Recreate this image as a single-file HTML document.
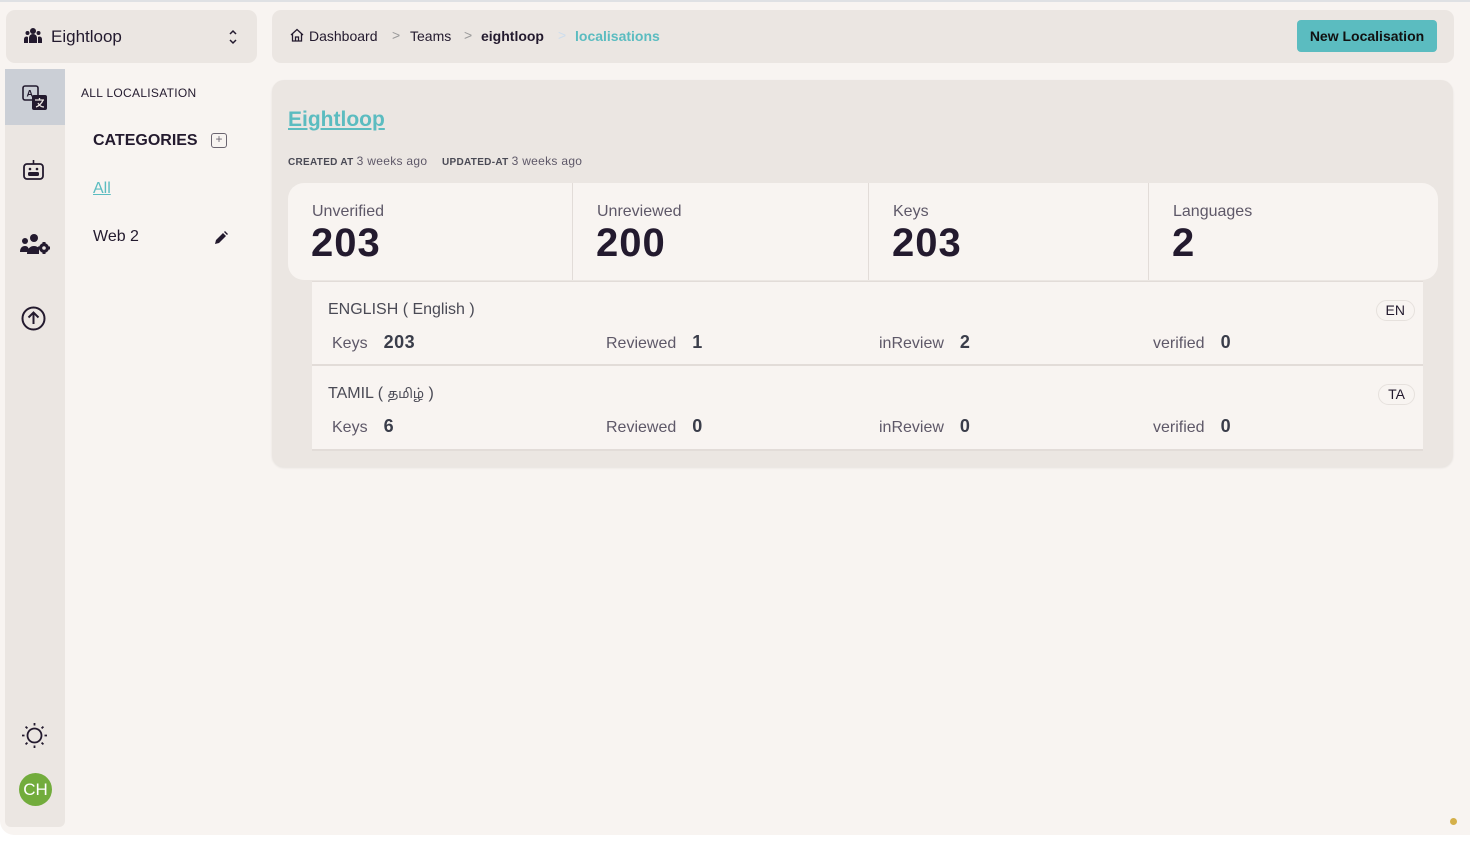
<!DOCTYPE html>
<html><head><style>
*{box-sizing:border-box;margin:0;padding:0}
body{width:1479px;height:841px;background:#fff;font-family:"Liberation Sans","Noto Sans Tamil",sans-serif;position:relative;overflow:hidden;color:#231a2e}
.app{position:absolute;left:0;top:0;width:1470px;height:835px;background:#f8f4f1;border-top:2px solid #dfe1e4;border-radius:0 0 0 14px}
.abs{position:absolute}
.team{left:6px;top:8px;width:251px;height:53px;background:#ebe6e2;border-radius:9px}
.rail{left:5px;top:67px;width:60px;height:758px;background:#ebe6e2;border-radius:0 0 6px 6px}
.bc{left:272px;top:8px;width:1182px;height:53px;background:#ebe6e2;border-radius:9px;font-size:14px}
.card{left:272px;top:78px;width:1181px;height:387px;background:#ebe6e2;border-radius:12px;box-shadow:0 1px 2px rgba(0,0,0,.08)}
.stats{left:16px;top:103px;width:1150px;height:97px;background:#f8f4f1;border-radius:16px}
.stat{position:absolute;top:0;height:97px;border-left:1px solid #e2dcd8}
.stat .l{position:absolute;left:24px;top:20px;font-size:16px;color:#5e5868}
.stat .n{position:absolute;left:23px;top:38px;font-size:40px;font-weight:bold;color:#231a2e;letter-spacing:1px}
.row{position:absolute;left:40px;width:1111px;height:85px;background:#f8f4f1;border-bottom:2px solid #e2dcd8}
.row .t{position:absolute;left:16px;top:19px;font-size:16px;color:#4a4a55}
.row .c{position:absolute;top:50px;font-size:16px;color:#5e5868}
.row .c b{color:#3a3d4a;margin-left:16px;font-size:18px;letter-spacing:.5px}
.pill{position:absolute;right:8px;top:18px;height:21px;padding:0 9px;border:1px solid #e6e1dd;border-radius:11px;font-size:14px;line-height:19px;color:#231a2e}
</style></head><body>
<div class="app">
 <div class="abs team">
  <svg class="abs" style="left:18px;top:17px" width="18" height="17" viewBox="0 0 18 17" fill="#231a2e"><circle cx="9" cy="4" r="3"/><circle cx="3.5" cy="6" r="2"/><circle cx="14.5" cy="6" r="2"/><path d="M5 16v-5a4 4 0 0 1 8 0v5z"/><path d="M0 16v-4a2.5 2.5 0 0 1 4-2v6zM18 16v-4a2.5 2.5 0 0 0-4-2v6z"/></svg>
  <span class="abs" style="left:45px;top:17px;font-size:17px">Eightloop</span>
  <svg class="abs" style="left:222px;top:19px" width="10" height="16" viewBox="0 0 10 16" fill="none" stroke="#231a2e" stroke-width="1.5"><path d="M2 5l3-3 3 3M2 11l3 3 3-3"/></svg>
 </div>
 <div class="abs rail">
  <div class="abs" style="left:0;top:0;width:60px;height:56px;background:#cbcfd6"></div>
  <svg class="abs" style="left:17px;top:16px" width="26" height="26" viewBox="0 0 26 26"><rect x="1" y="1" width="15" height="14" rx="2" fill="none" stroke="#231a2e" stroke-width="1.6"/><text x="4.5" y="11.5" font-size="9" font-weight="bold" fill="#231a2e" font-family="Liberation Sans">A</text><rect x="10" y="10" width="15" height="15" rx="2" fill="#231a2e"/><path d="M13 15h9M17.5 13v2M14 22c3-1 6-4 7-7M16 18c1 2 3 4 6 4" stroke="#ebe6e2" stroke-width="1.3" fill="none"/></svg>
  <svg class="abs" style="left:18px;top:90px" width="21" height="22" viewBox="0 0 21 22"><path d="M10.5 1v4" stroke="#231a2e" stroke-width="1.6"/><rect x="1" y="5" width="19" height="15" rx="3" fill="none" stroke="#231a2e" stroke-width="1.8"/><circle cx="7" cy="10" r="1.3" fill="#231a2e"/><circle cx="14" cy="10" r="1.3" fill="#231a2e"/><rect x="5" y="13" width="11" height="4" rx="1.5" fill="#231a2e"/></svg>
  <svg class="abs" style="left:15px;top:164px" width="30" height="22" viewBox="0 0 30 22" fill="#231a2e"><circle cx="14" cy="5" r="4"/><circle cx="5" cy="8" r="3"/><path d="M0 19c0-4 2-6 5-6s4 2 4 6zM7 21c0-5 3-8 7-8 2 0 4 1 5 2v6z"/><circle cx="24" cy="15" r="5"/><circle cx="24" cy="15" r="1.8" fill="#ebe6e2"/><path d="M22.5 9h3v2h-3zM22.5 19h3v2h-3zM18 13.5h2v3h-2zM28 13.5h2v3h-2z"/></svg>
  <svg class="abs" style="left:16px;top:237px" width="25" height="25" viewBox="0 0 25 25" fill="none" stroke="#231a2e" stroke-width="2"><circle cx="12.5" cy="12.5" r="11"/><path d="M12.5 18V7M7.5 11.5l5-5 5 5"/></svg>
  <svg class="abs" style="left:16px;top:653px" width="27" height="27" viewBox="0 0 27 27" stroke="#231a2e" fill="none"><circle cx="13.5" cy="13.5" r="7" stroke-width="1.8"/><g stroke-width="1.8"><path d="M13.5 1v2.5M13.5 23.5V26M1 13.5h2.5M23.5 13.5H26M4.6 4.6l1.8 1.8M20.6 20.6l1.8 1.8M4.6 22.4l1.8-1.8M20.6 6.4l1.8-1.8"/></g></svg>
  <div class="abs" style="left:14px;top:704px;width:33px;height:33px;border-radius:50%;background:#72ac3c;color:#fff;font-size:17px;line-height:33px;text-align:center">CH</div>
 </div>
 <span class="abs" style="left:81px;top:84px;font-size:12px;letter-spacing:.3px">ALL LOCALISATION</span>
 <span class="abs" style="left:93px;top:130px;font-size:16px;font-weight:bold">CATEGORIES</span>
 <div class="abs" style="left:211px;top:131px;width:16px;height:15px;border:1.5px solid #6b6570;border-radius:3px;font-size:12px;line-height:11px;text-align:center;color:#6b6570">+</div>
 <span class="abs" style="left:93px;top:178px;font-size:16px;color:#5bbcc0;text-decoration:underline">All</span>
 <span class="abs" style="left:93px;top:226px;font-size:16px">Web 2</span>
 <svg class="abs" style="left:214px;top:229px" width="14" height="14" viewBox="0 0 14 14" fill="#231a2e"><path d="M1 13l1-4 7-7 3 3-7 7zM10 1l1-1 3 3-1 1z"/></svg>
 <div class="abs bc">
  <svg class="abs" style="left:18px;top:18px" width="14" height="14" viewBox="0 0 14 14" fill="none" stroke="#231a2e" stroke-width="1.3"><path d="M1 7l6-5.5L13 7M2.5 5.5V13h9V5.5M5.5 13V9h3v4"/></svg>
  <span class="abs" style="left:37px;top:18px">Dashboard</span>
  <span class="abs" style="left:120px;top:17px;color:#999">&gt;</span>
  <span class="abs" style="left:138px;top:18px">Teams</span>
  <span class="abs" style="left:192px;top:17px;color:#999">&gt;</span>
  <span class="abs" style="left:209px;top:18px;font-weight:bold">eightloop</span>
  <span class="abs" style="left:286px;top:17px;color:#cde">&gt;</span>
  <span class="abs" style="left:303px;top:18px;color:#5bbcc0;font-weight:bold">localisations</span>
  <div class="abs" style="left:1025px;top:10px;width:140px;height:32px;background:#5bbcc0;border-radius:4px;font-weight:bold;line-height:32px;text-align:center;color:#111">New Localisation</div>
 </div>
 <div class="abs card">
  <span class="abs" style="left:16px;top:28px;font-size:21px;font-weight:bold;color:#5bbcc0;text-decoration:underline">Eightloop</span>
  <span class="abs" style="left:16px;top:74px;font-size:10px;font-weight:bold;color:#4a4a55;letter-spacing:.3px">CREATED AT <span style="font-weight:normal;font-size:12px;color:#5e5868">3 weeks ago</span></span>
  <span class="abs" style="left:170px;top:74px;font-size:10px;font-weight:bold;color:#4a4a55;letter-spacing:.3px">UPDATED-AT <span style="font-weight:normal;font-size:12px;color:#5e5868">3 weeks ago</span></span>
  <div class="abs stats">
   <div class="stat" style="left:0;width:284px;border:none"><span class="l">Unverified</span><span class="n">203</span></div>
   <div class="stat" style="left:284px;width:296px"><span class="l">Unreviewed</span><span class="n">200</span></div>
   <div class="stat" style="left:580px;width:280px"><span class="l">Keys</span><span class="n">203</span></div>
   <div class="stat" style="left:860px;width:290px"><span class="l">Languages</span><span class="n">2</span></div>
  </div>
  <div class="row" style="top:201px;border-top:1px solid #e2dcd8">
   <span class="t">ENGLISH ( English )</span><span class="pill">EN</span>
   <span class="c" style="left:20px">Keys<b>203</b></span>
   <span class="c" style="left:294px">Reviewed<b>1</b></span>
   <span class="c" style="left:567px">inReview<b>2</b></span>
   <span class="c" style="left:841px">verified<b>0</b></span>
  </div>
  <div class="row" style="top:286px">
   <span class="t">TAMIL ( <span style="font-size:13px">தமிழ்</span> )</span><span class="pill">TA</span>
   <span class="c" style="left:20px">Keys<b>6</b></span>
   <span class="c" style="left:294px">Reviewed<b>0</b></span>
   <span class="c" style="left:567px">inReview<b>0</b></span>
   <span class="c" style="left:841px">verified<b>0</b></span>
  </div>
 </div>
 <div class="abs" style="left:1450px;top:816px;width:7px;height:7px;border-radius:50%;background:#d4b04a"></div>
</div>
</body></html>
